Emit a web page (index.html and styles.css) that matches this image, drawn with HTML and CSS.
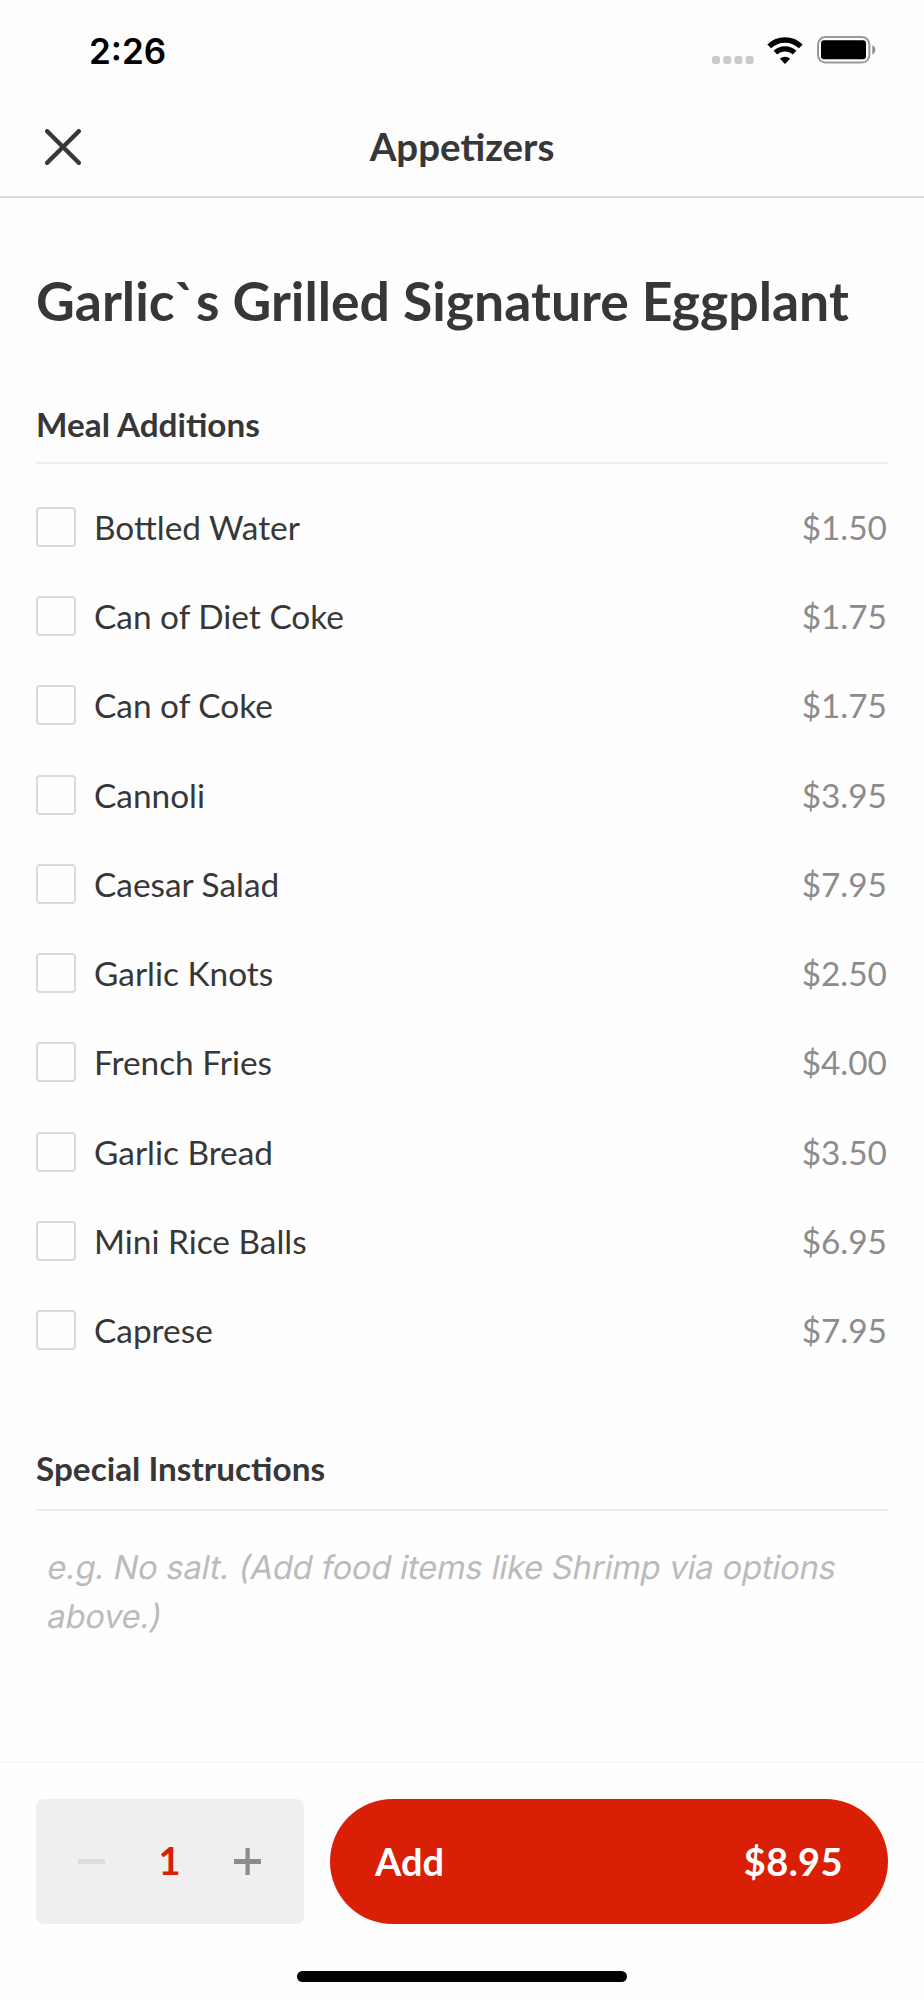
FILE: index.html
```html
<!DOCTYPE html>
<html lang="en">
<head>
    <meta charset="UTF-8">
    <meta name="viewport" content="width=device-width, initial-scale=1.0">
    <title>Appetizers</title>
    <link rel="stylesheet" href="styles.css">
</head>
<body>
    <header class="header">
        <div class="status-bar">
            <span class="time">2:26</span>
            <div class="status-icons">
                <svg class="dots" width="42" height="8" viewBox="0 0 42 8" fill="#cbcbcb">
                    <rect x="0" y="0" width="8" height="8" rx="2.4"/>
                    <rect x="11.2" y="0" width="8" height="8" rx="2.4"/>
                    <rect x="22.4" y="0" width="8" height="8" rx="2.4"/>
                    <rect x="33.6" y="0" width="8" height="8" rx="2.4"/>
                </svg>
                <svg class="wifi" width="36" height="27" viewBox="0 0 36 27">
                    <path d="M2.2 9.4a22.6 22.6 0 0 1 31.6 0" fill="none" stroke="#000" stroke-width="5.4"/>
                    <path d="M8.4 15.7a13.8 13.8 0 0 1 19.2 0" fill="none" stroke="#000" stroke-width="5.2"/>
                    <path d="M18 27l-5.1-5.2a7.4 7.4 0 0 1 10.2 0z"/>
                </svg>
                <svg class="battery" width="60" height="28" viewBox="0 0 60 28">
                    <rect x="1" y="1" width="51.4" height="25.6" rx="7.5" fill="none" stroke="#999" stroke-width="2"/>
                    <rect x="4" y="4.3" width="45" height="19" rx="3"/>
                    <path d="M55.3 9.3c4 1.6 4 7.6 0 9.2z" fill="#8c8c8c"/>
                </svg>
            </div>
        </div>
        <nav class="nav">
            <button class="close" aria-label="Close">
                <svg width="36" height="36" viewBox="0 0 36 36" fill="none" stroke="#373737" stroke-width="4.4" stroke-linecap="round">
                    <path d="M2.2 2.2l31.6 31.6M33.8 2.2L2.2 33.8"/>
                </svg>
            </button>
            <span class="nav-title">Appetizers</span>
        </nav>
    </header>

    <main class="content">
        <h1>Garlic`s Grilled Signature Eggplant</h1>

        <h2>Meal Additions</h2>
        <ul class="additions">
            <li><label><input type="checkbox">Bottled Water</label><span class="price">$1.50</span></li>
            <li><label><input type="checkbox">Can of Diet Coke</label><span class="price">$1.75</span></li>
            <li><label><input type="checkbox">Can of Coke</label><span class="price">$1.75</span></li>
            <li><label><input type="checkbox">Cannoli</label><span class="price">$3.95</span></li>
            <li><label><input type="checkbox">Caesar Salad</label><span class="price">$7.95</span></li>
            <li><label><input type="checkbox">Garlic Knots</label><span class="price">$2.50</span></li>
            <li><label><input type="checkbox">French Fries</label><span class="price">$4.00</span></li>
            <li><label><input type="checkbox">Garlic Bread</label><span class="price">$3.50</span></li>
            <li><label><input type="checkbox">Mini Rice Balls</label><span class="price">$6.95</span></li>
            <li><label><input type="checkbox">Caprese</label><span class="price">$7.95</span></li>
        </ul>

        <h2 class="special">Special Instructions</h2>
        <p class="instructions">
            <span>e.g. No salt. (Add food items like Shrimp via options</span>
            <span>above.)</span>
        </p>
    </main>

    <footer class="footer">
        <div class="actions">
            <div class="stepper">
                <button class="minus" aria-label="Remove one">
                    <svg width="27" height="27" viewBox="0 0 27 27"><path d="M0 11h27v5H0z" fill="#dcdcdc"/></svg>
                </button>
                <span class="count">1</span>
                <button class="plus" aria-label="Add one">
                    <svg width="27" height="27" viewBox="0 0 27 27"><path d="M0 11h11.5V0h4.2v11H27v5H15.7v11h-4.2V16H0z" fill="#8c8c8c"/></svg>
                </button>
            </div>
            <button class="add"><span>Add</span><span class="total">$8.95</span></button>
        </div>
        <div class="home-indicator"></div>
    </footer>
</body>
</html>
```

FILE: styles.css
```css
* {
    margin: 0;
    padding: 0;
    box-sizing: border-box;
}

body {
    height: 2000px;
    display: flex;
    flex-direction: column;
    background-color: #fefefe;
    color: #373737;
    font-family: Lato, sans-serif;
    font-size: 33.4px;
}

button {
    border: none;
    background: none;
    font: inherit;
    color: inherit;
    cursor: pointer;
}

svg {
    display: block;
}

/* Header */
.header {
    height: 198px;
    background-color: #fdfdfd;
    border-bottom: 2px solid #dcdcdc;
}

.status-bar {
    height: 98px;
    padding: 4px 47px 0 89px;
    display: flex;
    justify-content: space-between;
    align-items: center;
}

.time {
    font-family: Inter, sans-serif;
    font-size: 35px;
    font-weight: 600;
    color: #000;
}

.status-icons {
    padding-bottom: 3px;
    display: flex;
    align-items: flex-end;
}

.wifi {
    margin-left: 13px;
}

.battery {
    margin-left: 14px;
}

.nav {
    height: 98px;
    padding: 0 45px 1px;
    display: grid;
    grid-template-columns: 36px 1fr 36px;
    align-items: center;
}

.nav-title {
    padding-bottom: 2px;
    text-align: center;
    font-size: 38.5px;
    font-weight: 700;
}

/* Content */
.content {
    flex: 1;
    padding: 70px 36px 0;
}

h1 {
    font-size: 53.5px;
    font-weight: 700;
    line-height: 64px;
    white-space: nowrap;
}

h2 {
    margin-top: 72px;
    padding-bottom: 18px;
    border-bottom: 2px solid #eee;
    font-size: 33.3px;
    font-weight: 700;
    line-height: 40px;
}

.special {
    margin-top: 73px;
    padding-bottom: 21px;
}

.additions {
    padding-top: 18px;
    list-style: none;
}

.additions li {
    height: 89.3px;
    display: flex;
    justify-content: space-between;
    align-items: center;
}

.additions label {
    display: flex;
    align-items: center;
    gap: 18px;
}

.additions input {
    appearance: none;
    width: 40px;
    height: 40px;
    border: 2px solid #dadada;
    border-radius: 4px;
}

.price {
    margin-right: 1px;
    color: #8c8c8c;
}

.instructions {
    margin-top: 32px;
    padding: 0 12px;
    font-family: Inter, sans-serif;
    font-size: 32.6px;
    line-height: 49px;
    letter-spacing: -0.13px;
    color: #bbb;
}

/* slanted upright letters instead of the cursive italic */
.instructions span {
    display: block;
    transform: skewX(-11deg);
    white-space: nowrap;
}

/* Footer */
.footer {
    height: 238px;
    padding: 36px 36px 18px;
    border-top: 1px solid #f4f4f4;
    display: flex;
    flex-direction: column;
    justify-content: space-between;
    align-items: center;
}

.actions {
    width: 100%;
    height: 125px;
    display: flex;
    gap: 26px;
}

.stepper {
    width: 268px;
    padding: 0 43px 0 42px;
    border-radius: 8px;
    background-color: #efefef;
    display: flex;
    justify-content: space-between;
    align-items: center;
}

.count {
    padding-bottom: 3px;
    font-size: 38px;
    font-weight: 700;
    color: #d91f06;
}

.add {
    flex: 1;
    padding: 0 45px 1px;
    border-radius: 63px;
    background-color: #d91f06;
    color: #fff;
    font-size: 38px;
    font-weight: 700;
    display: flex;
    justify-content: space-between;
    align-items: center;
}

.total {
    letter-spacing: 0.4px;
}

.home-indicator {
    width: 330px;
    height: 11px;
    border-radius: 6px;
    background-color: #000;
}
```
